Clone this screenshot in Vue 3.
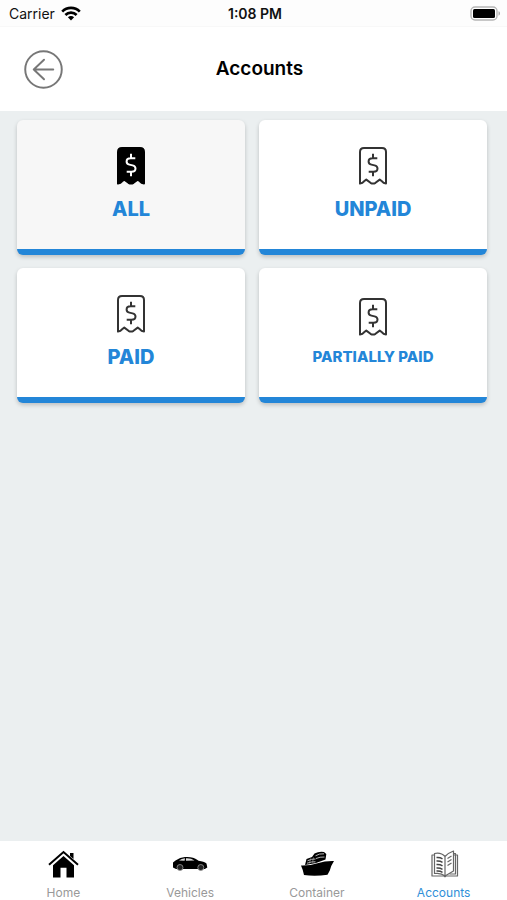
<script setup>
import { ref } from 'vue'

const filters = [
  { id: 'all', label: 'ALL', filled: true },
  { id: 'unpaid', label: 'UNPAID' },
  { id: 'paid', label: 'PAID' },
  { id: 'partial', label: 'PARTIALLY PAID', small: true },
]
const tabs = [
  { id: 'home', label: 'Home' },
  { id: 'vehicles', label: 'Vehicles' },
  { id: 'container', label: 'Container' },
  { id: 'accounts', label: 'Accounts' },
]
const activeTab = ref('accounts')
</script>

<template>
  <div class="screen">
    <div class="status">
      <div class="carrier">
        <span>Carrier</span>
        <svg class="wifi" viewBox="0 0 20 15" aria-hidden="true">
          <g fill="none" stroke="#000" stroke-width="2.7">
            <path d="M1.2 5.6C6.1.7 13.9.7 18.8 5.6" />
            <path d="M4.4 9C7.5 5.9 12.5 5.9 15.6 9" />
          </g>
          <path d="M6.900 11.200c1.800-1.600 4.400-1.600 6.200 0L10 14.400z" />
        </svg>
      </div>
      <time class="time">1:08 PM</time>
      <svg class="battery" viewBox="0 0 31 15" aria-hidden="true">
        <rect x="1" y="1" width="26" height="13" rx="4" fill="#fff" stroke="#b5b5b5" stroke-width="1.4" />
        <rect x="3" y="3" width="22" height="9" rx="1.5" />
        <path d="M28.500 5.300c2 .6 2 3.800 0 4.400z" fill="#aaa" />
      </svg>
    </div>

    <header class="header">
      <button class="back" type="button" aria-label="Back">
        <svg viewBox="0 0 38 38" fill="none" stroke="#777" stroke-width="1.9" stroke-linecap="round" stroke-linejoin="round">
          <circle cx="19" cy="19" r="17.800" />
          <path d="M28.500 19H9.500M19.500 9.500L9.500 19l10 9.500" />
        </svg>
      </button>
      <h1 class="title">Accounts</h1>
    </header>

    <main class="content">
      <button
        v-for="item in filters"
        :key="item.id"
        type="button"
        class="card"
        :class="{ selected: item.filled }"
      >
        <svg class="receipt" :class="{ filled: item.filled }" viewBox="0 0 28 38" aria-hidden="true">
          <path
            class="paper"
            d="M5 1h18q4 0 4 4v31.500q-2.600-.4-4-2.200l-2.300-1.700-4.200 3.200q-2.500 1.600-5 0l-4.200-3.200L5 34.300q-1.400 1.800-4 2.200V5q0-4 4-4z"
          />
          <path
            class="dollar"
            d="M18.300 11.200h-4.700q-4 0-4 3.200 0 2.500 2.800 3.200l3.200.8q2.900.7 2.900 3.200 0 3.200-4 3.200H9.700M14 6.800v4.400M14 24.800v4.400"
          />
        </svg>
        <span class="label" :class="{ small: item.small }">{{ item.label }}</span>
      </button>
    </main>

    <nav class="tabs" aria-label="Main">
      <a
        v-for="tab in tabs"
        :key="tab.id"
        :href="'#' + tab.id"
        class="tab"
        :class="{ active: activeTab === tab.id }"
        @click="activeTab = tab.id"
      >
        <svg v-if="tab.id === 'home'" class="icon" viewBox="0 0 36 30" aria-hidden="true">
          <path d="M8 16.200L18.500 7 29 16.200V28.500h-7.500v-9.800h-6v9.800H8zM25 4h3.500v6L25 7z" />
          <path d="M4 15.800L18.500 3 33 15.800" fill="none" stroke="#000" stroke-width="2" />
        </svg>
        <svg v-else-if="tab.id === 'vehicles'" class="icon" viewBox="0 0 36 30" aria-hidden="true">
          <path d="M1 13.500l2.500-2Q8 8.300 13 8q8-.6 12.500 3l1 .8q5.500.6 8 2.700l.8 4-2.500 1.500H4l-3-1.500z" />
          <path d="M7 11.500q2.500-2 6-2.300l-.4 2.600zM14 9.200q5-.3 8.500 2.300l-8.500.3z" fill="#ddd" />
          <g fill="#222" stroke="#999" stroke-width=".8">
            <circle cx="8" cy="18.500" r="3" />
            <circle cx="28.800" cy="18.500" r="3" />
          </g>
        </svg>
        <svg v-else-if="tab.id === 'container'" class="icon" viewBox="0 0 36 30" aria-hidden="true">
          <path d="M2 16.500q9 .3 16.500-2.200 8-2.600 16.500-2.300-3 4.500-4.200 9.500l-2.300 4.300q-12 1.600-23.500.3Q4.300 21.500 2 16.500z" />
          <path d="M6 16l1.500-6 5.500-2 2.500-3.500Q20 2.200 25 3l2.300 2-.8 5.500L17 14z" />
          <path d="M8.500 11.800q4-2 8-1.800M8 14.200q5-1.800 8.500-1.400M16.500 6.800q4-2.500 8.500-2M17 9.500q4-1.800 8.500-1.500" fill="none" stroke="#ccc" stroke-width=".9" />
          <path d="M11.500 9.500l-1 5M14.500 8.500l-1 5" stroke="#999" stroke-width=".7" />
        </svg>
        <svg v-else class="icon" viewBox="0 0 36 30" fill="none" stroke="#666" stroke-width="1.2" stroke-linejoin="round" aria-hidden="true">
          <path fill="#fff" d="M8.500 4.500Q15 3 19 7.500V27q-4-3.500-10.500-2.500zM19 7.500Q22 4 27.500 2v20L19 27z" />
          <path d="M8.500 6H6v21h12l1 .8 1-.8h11.500V6h-4M28 4.500h1.500V25h-6" />
          <path stroke="#444" stroke-width="1.400" d="M10.500 8.500q3.500-.3 6 1.300M10.500 12q3.500-.3 6 1.300M10.500 15.500q3.500-.3 6 1.300M10.500 19q3.500-.3 6 1.300M10.500 22q3.500-.3 6 1.300" />
          <path d="M21.500 9.500l4-2.500M21.500 13l4-2.500M21.500 16.500l4-2.500" />
        </svg>
        <span>{{ tab.label }}</span>
      </a>
    </nav>
  </div>
</template>

<style>
body {
  margin: 0;
}
</style>

<style scoped>
.screen {
  display: flex;
  flex-direction: column;
  min-height: 100vh;
  background: #ebeff0;
  font-family: Inter, "Liberation Sans", sans-serif;
  color: #111;
}
.status {
  display: grid;
  grid-template-columns: 1fr auto 1fr;
  align-items: center;
  height: 26px;
  padding: 0 6px 0 9px;
  background: #fdfdfd;
  border-bottom: 1px solid #f8f8f8;
  font-size: 14px;
}
.carrier {
  display: flex;
  align-items: center;
  gap: 6px;
}
.wifi {
  width: 20px;
  height: 15px;
}
.time {
  font-weight: 600;
}
.battery {
  width: 31px;
  height: 15px;
  justify-self: end;
}
.header {
  display: grid;
  grid-template-columns: 1fr auto 1fr;
  align-items: center;
  height: 84px;
  padding: 0 12px 0 24px;
  background: #fff;
}
.back {
  width: 39px;
  height: 39px;
  padding: 0;
  border: 0;
  background: none;
}
.back svg {
  display: block;
  width: 100%;
  height: 100%;
}
.title {
  margin: 0;
  font-size: 19px;
  font-weight: 600;
  line-height: 24px;
  color: #000;
}
.content {
  flex: 1;
  display: grid;
  grid-template-columns: 1fr 1fr;
  align-content: start;
  gap: 13px 14px;
  padding: 9px 20px 9px 17px;
}
.card {
  display: flex;
  flex-direction: column;
  align-items: center;
  justify-content: center;
  gap: 12px;
  height: 135px;
  padding: 0 0 2px;
  border: 0;
  border-bottom: 6px solid #2386d8;
  border-radius: 6px;
  background: #fff;
  box-shadow: 0 2px 4px rgba(0, 0, 0, 0.2);
  font-family: inherit;
}
.card.selected {
  background: #f7f7f7;
}
.receipt {
  width: 28px;
  height: 38px;
}
.paper {
  fill: none;
  stroke: #333;
  stroke-width: 2;
  stroke-linejoin: round;
}
.dollar {
  fill: none;
  stroke: #333;
  stroke-width: 2;
}
.filled .paper {
  fill: #000;
  stroke: #000;
}
.filled .dollar {
  stroke: #fff;
}
.label {
  color: #2386d8;
  font-size: 20px;
  font-weight: 800;
  line-height: 24px;
}
.label.small {
  font-size: 15px;
  line-height: 18px;
}
.tabs {
  display: grid;
  grid-template-columns: repeat(4, 1fr);
  height: 59px;
  background: #fff;
}
.tab {
  display: flex;
  flex-direction: column;
  align-items: center;
  gap: 6px;
  padding-top: 8px;
  color: #999;
  font-size: 12px;
  line-height: 16px;
  text-decoration: none;
}
.tab.active {
  color: #2f8fd8;
}
.icon {
  width: 36px;
  height: 30px;
}
</style>
